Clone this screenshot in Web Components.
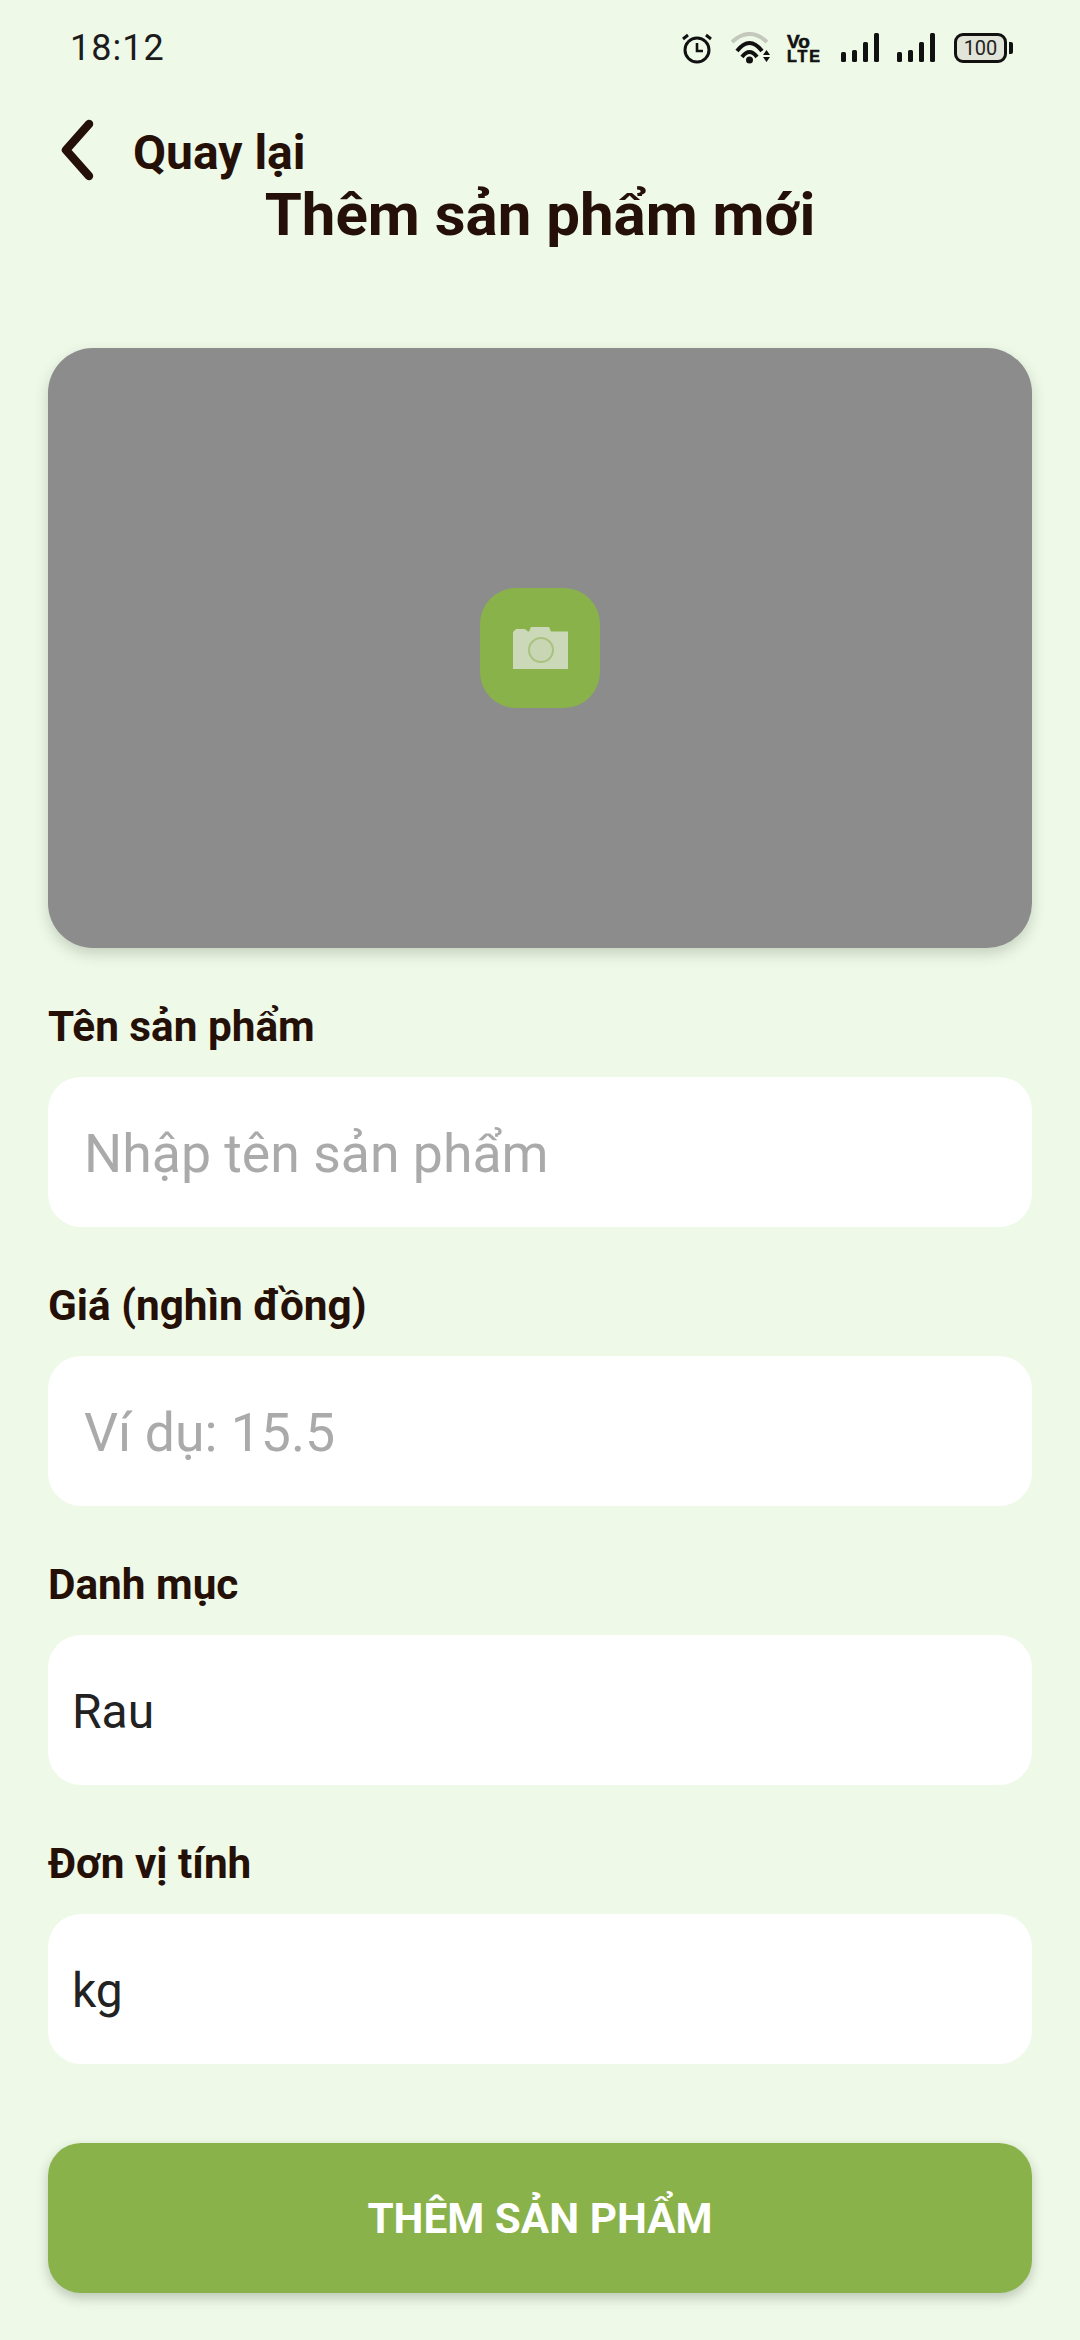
<!DOCTYPE html>
<html lang="vi">
<head>
<meta charset="utf-8">
<title>Thêm sản phẩm mới</title>
<style>
  html, body {
    margin: 0;
    background: #eef9e8;
  }
  body {
    font-family: Roboto, "Noto Sans", sans-serif;
    color: #251008;
  }
</style>
</head>
<body>
<add-product-page>
  <status-bar slot="status" time="18:12"></status-bar>
  <back-link slot="header">Quay lại</back-link>
  <span slot="title">Thêm sản phẩm mới</span>
  <image-picker slot="picker"></image-picker>
  <form-field label="Tên sản phẩm" placeholder="Nhập tên sản phẩm"></form-field>
  <form-field label="Giá (nghìn đồng)" placeholder="Ví dụ: 15.5"></form-field>
  <form-field label="Danh mục" value="Rau"></form-field>
  <form-field label="Đơn vị tính" value="kg"></form-field>
  <primary-button slot="action">THÊM SẢN PHẨM</primary-button>
</add-product-page>

<script>
(function() {
  class StatusBar extends HTMLElement {
    constructor() {
      super();
      this.attachShadow({ mode: 'open' });
      this.shadowRoot.innerHTML = `
      <style>
        :host {
          display: flex;
          align-items: center;
          justify-content: space-between;
          height: 96px;
          padding: 0 67px 0 70px;
          color: #1c1c1c;
        }
        #time {
          font-size: 36px;
          letter-spacing: 1px;
        }
        #icons {
          display: flex;
          align-items: center;
        }
        svg {
          display: block;
        }
        #volte {
          display: flex;
          flex-direction: column;
          width: 36px;
          margin: 0 18px 0 16px;
          font-family: "Liberation Sans", sans-serif;
          font-weight: 700;
          color: #111;
          -webkit-text-stroke: 0.6px #111;
        }
        #volte span:first-child {
          font-size: 19px;
          line-height: 17px;
        }
        #volte span:last-child {
          font-size: 16px;
          line-height: 14px;
          letter-spacing: 2px;
        }
        #battery {
          display: flex;
          align-items: center;
          margin-left: 18px;
        }
        #cell {
          box-sizing: border-box;
          width: 53px;
          height: 30px;
          border: 3px solid #111;
          border-radius: 9px;
          background: #e1e4d8;
          font-size: 20px;
          line-height: 24px;
          text-align: center;
          color: #222;
        }
        #nub {
          width: 4px;
          height: 12px;
          margin-left: 2px;
          background: #111;
          border-radius: 0 2px 2px 0;
        }
      </style>
      <span id="time"></span>
      <div id="icons">
        <svg width="32" height="32" viewBox="0 0 32 32" fill="none" stroke="#111">
          <circle cx="16" cy="18" r="12" stroke-width="3"/>
          <path d="M16 11v8h6" stroke-width="2.6"/>
          <path d="M2 7l5-4M30 7l-5-4" stroke-width="3"/>
        </svg>
        <svg width="40" height="32" viewBox="0 0 40 32" fill="none" style="margin-left:18px">
          <path d="M1 10Q18.500-6 36 10" stroke="#c5c9bd" stroke-width="4"/>
          <path d="M6 19Q18.500 3 31 19" stroke="#111" stroke-width="4"/>
          <path d="M11 25Q18.500 15 26 25" stroke="#111" stroke-width="4"/>
          <circle cx="18.500" cy="28" r="3.500" fill="#111"/>
          <path d="M32 23l3.500-5 3.500 5zM32 25l3.500 5 3.500-5z" fill="#111"/>
        </svg>
        <div id="volte"><span>Vo</span><span>LTE</span></div>
        <svg width="39" height="32" viewBox="0 0 39 32" fill="#111">
          <rect x="0" y="20" width="5" height="10" rx="1.500"/>
          <rect x="11" y="18" width="5" height="12" rx="1.500"/>
          <rect x="22" y="10" width="5" height="20" rx="1.500"/>
          <rect x="33" y="1" width="5" height="29" rx="1.500"/>
        </svg>
        <svg width="39" height="32" viewBox="0 0 39 32" fill="#111" style="margin-left:17px">
          <rect x="0" y="20" width="5" height="10" rx="1.500"/>
          <rect x="11" y="18" width="5" height="12" rx="1.500"/>
          <rect x="22" y="10" width="5" height="20" rx="1.500"/>
          <rect x="33" y="1" width="5" height="29" rx="1.500"/>
        </svg>
        <div id="battery"><div id="cell">100</div><div id="nub"></div></div>
      </div>
      `;
      this.shadowRoot.getElementById('time').textContent = this.getAttribute('time');
    }
  }

  class BackLink extends HTMLElement {
    constructor() {
      super();
      this.attachShadow({ mode: 'open' });
      this.shadowRoot.innerHTML = `
      <style>
        :host {
          display: flex;
          align-items: center;
          gap: 38px;
          height: 66px;
          margin-top: 21px;
          padding-left: 60px;
          font-size: 48px;
          font-weight: 700;
          color: #251008;
        }
        svg {
          display: block;
        }
        #text {
          padding-top: 4px;
        }
      </style>
      <svg width="35" height="66" viewBox="0 0 35 66" fill="none">
        <path d="M29 7L6 33l23 26" stroke="#251008" stroke-width="8.500" stroke-linecap="round" stroke-linejoin="round"/>
      </svg>
      <div id="text"><slot></slot></div>
      `;
    }
  }

  class ImagePicker extends HTMLElement {
    constructor() {
      super();
      this.attachShadow({ mode: 'open' });
      this.shadowRoot.innerHTML = `
      <style>
        :host {
          display: flex;
          align-items: center;
          justify-content: center;
          height: 600px;
          border-radius: 45px;
          background: #8c8c8c;
          box-shadow: 0 6px 14px rgba(60, 70, 50, 0.22);
        }
        #btn {
          display: flex;
          align-items: center;
          justify-content: center;
          width: 120px;
          height: 120px;
          border-radius: 36px;
          background: #8ab24b;
        }
        svg {
          display: block;
        }
      </style>
      <div id="btn">
        <svg width="55" height="42" viewBox="0 0 55 42">
          <path d="M0 42V5l3-3h9l3 2.500h1L18 0h18l2 4.500h17V42z" fill="#ccd9b9"/>
          <circle cx="28" cy="23" r="12" fill="#c8d6b3" stroke="#a9c27f" stroke-width="2"/>
        </svg>
      </div>
      `;
    }
  }

  class FormField extends HTMLElement {
    constructor() {
      super();
      this.attachShadow({ mode: 'open' });
      this.shadowRoot.innerHTML = `
      <style>
        :host {
          display: block;
          margin-top: 30px;
        }
        #label {
          height: 99px;
          padding-top: 19px;
          box-sizing: border-box;
          font-size: 42.300px;
          font-weight: 700;
          line-height: 60px;
          color: #251008;
        }
        #box {
          display: flex;
          align-items: center;
          box-sizing: border-box;
          height: 150px;
          padding: 2px 24px 0;
          border-radius: 33px;
          background: #fff;
          font-size: 48px;
          color: #222;
        }
        #box.empty {
          padding-left: 36px;
          font-size: 53.600px;
          color: #aaa;
        }
      </style>
      <div id="label"></div>
      <div id="box"></div>
      `;
      const value = this.getAttribute('value');
      const box = this.shadowRoot.getElementById('box');
      this.shadowRoot.getElementById('label').textContent = this.getAttribute('label');
      box.textContent = value || this.getAttribute('placeholder');
      box.classList.toggle('empty', !value);
    }
  }

  class PrimaryButton extends HTMLElement {
    constructor() {
      super();
      this.attachShadow({ mode: 'open' });
      this.shadowRoot.innerHTML = `
      <style>
        :host {
          display: flex;
          align-items: center;
          justify-content: center;
          height: 150px;
          border-radius: 33px;
          background: #8ab24b;
          box-shadow: 0 5px 12px rgba(60, 70, 50, 0.28);
          color: #fff;
          font-size: 42.300px;
          font-weight: 700;
        }
      </style>
      <slot></slot>
      `;
    }
  }

  class AddProductPage extends HTMLElement {
    constructor() {
      super();
      this.attachShadow({ mode: 'open' });
      this.shadowRoot.innerHTML = `
      <style>
        :host {
          display: block;
          box-sizing: border-box;
          height: 2340px;
          overflow: hidden;
          background: #eef9e8;
        }
        h1 {
          margin: -3px 0 0;
          height: 69px;
          font-size: 60px;
          font-weight: 700;
          line-height: 69px;
          text-align: center;
          color: #251008;
        }
        #content {
          padding: 0 48px;
        }
        #picker {
          padding-top: 99px;
        }
        #action {
          padding-top: 79px;
        }
      </style>
      <slot name="status"></slot>
      <slot name="header"></slot>
      <h1><slot name="title"></slot></h1>
      <div id="content">
        <div id="picker"><slot name="picker"></slot></div>
        <slot></slot>
        <div id="action"><slot name="action"></slot></div>
      </div>
      `;
    }
  }

  customElements.define('status-bar', StatusBar);
  customElements.define('back-link', BackLink);
  customElements.define('image-picker', ImagePicker);
  customElements.define('form-field', FormField);
  customElements.define('primary-button', PrimaryButton);
  customElements.define('add-product-page', AddProductPage);
})();
</script>
</body>
</html>
